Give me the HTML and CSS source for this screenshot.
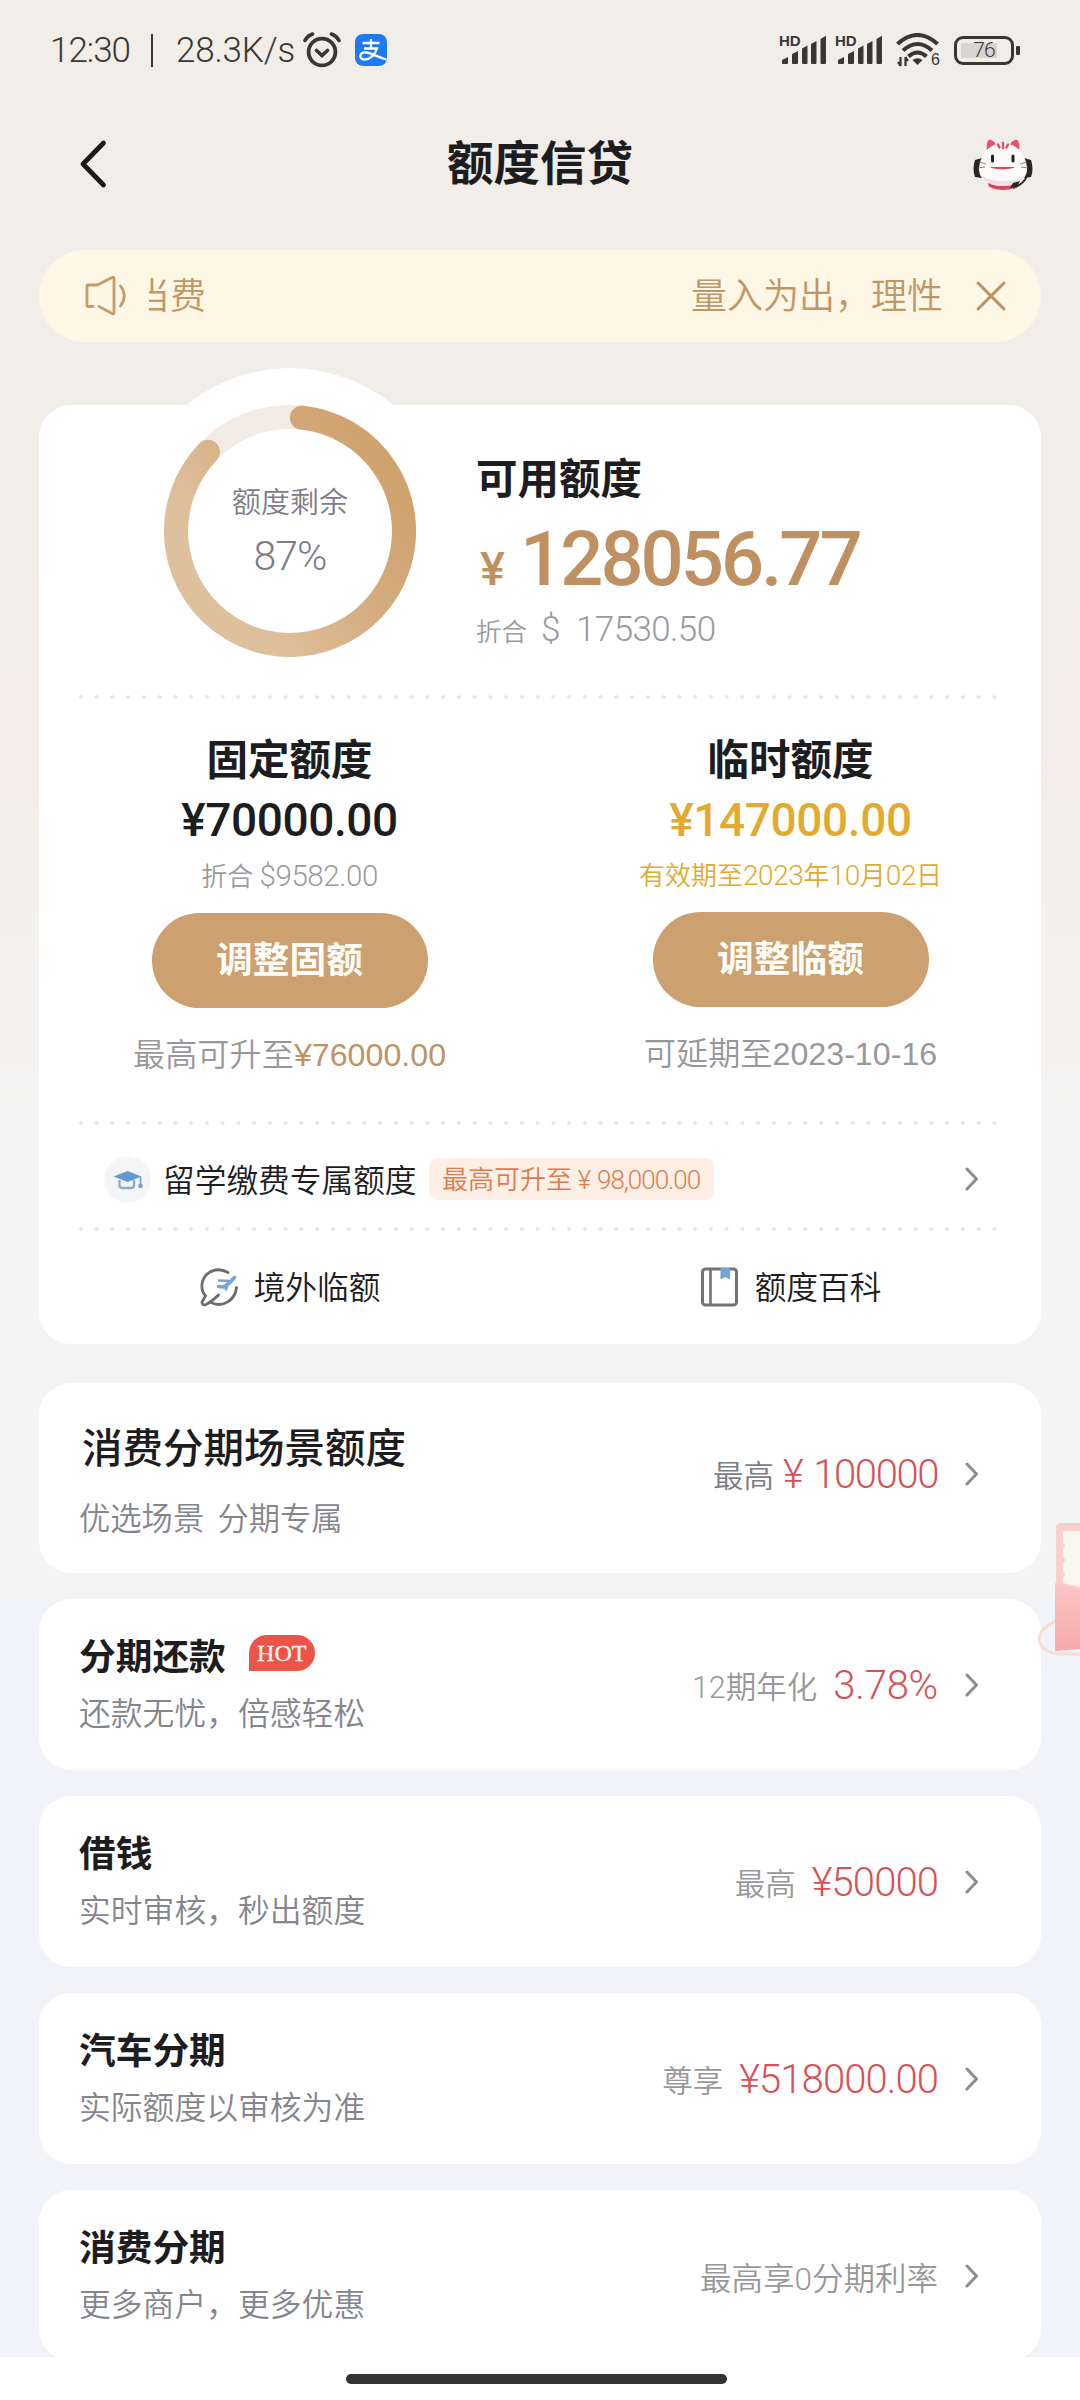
FILE: index.html
```html
<!DOCTYPE html>
<html lang="zh-CN">
<head>
<meta charset="utf-8">
<title>额度信贷</title>
<link rel="stylesheet" href="styles.css">
</head>
<body>
<div class="screen">
  <header class="status">
    <span class="clock">12:30</span><span class="sep"></span><span class="speed">28.3K/s</span>
    <svg class="alarm" width="38" height="36" viewBox="0 0 38 36" fill="none" stroke="#3a3632" stroke-linecap="round">
      <circle cx="19" cy="20" r="13.4" stroke-width="3.8"/>
      <path d="M13.500 18.500l5.500 5 5.500-5" stroke-width="3.6"/>
      <path d="M2 8.500Q4.500 3.800 9.500 2M36 8.500Q33.500 3.800 28.500 2" stroke-width="3.600"/>
    </svg>
    <svg class="alipay" width="32" height="32" viewBox="0 0 32 32">
      <rect width="32" height="32" rx="8" fill="#1d7af3"/>
      <path d="M7.500 9h17M16 5v9M9 14.500h13C20 21 14.500 26 9 25.500c-6-1-4.500-7.500 2-7 6 .5 12 5 20.500 7" fill="none" stroke="#fff" stroke-width="2.300"/>
    </svg>
    <div class="signals">
      <div class="sim"><span class="hd">HD</span><svg width="47" height="30" viewBox="0 0 47 30"><g fill="#3a3632"><path d="M2 28v-3l6-3v6q0 1-1 1H3q-1 0-1-1zM12 19l6-3v12q0 1-1 1h-4q-1 0-1-1zM22 13.500l5.500-3V28q0 1-1 1H23q-1 0-1-1zM31 9l5.500-3v22q0 1-1 1H32q-1 0-1-1zM40.500 4L46 .8V28q0 1-1 1h-3.500q-1 0-1-1z"/></g></svg></div>
      <div class="sim"><span class="hd">HD</span><svg width="47" height="30" viewBox="0 0 47 30"><g fill="#3a3632"><path d="M2 28v-3l6-3v6q0 1-1 1H3q-1 0-1-1zM12 19l6-3v12q0 1-1 1h-4q-1 0-1-1zM22 13.500l5.500-3V28q0 1-1 1H23q-1 0-1-1zM31 9l5.500-3v22q0 1-1 1H32q-1 0-1-1zM40.500 4L46 .8V28q0 1-1 1h-3.500q-1 0-1-1z"/></g></svg></div>
      <div class="wifi"><svg width="44" height="34" viewBox="0 0 44 34"><g fill="none" stroke="#3a3632" stroke-width="4"><path d="M1.500 11Q21.500-7 41.500 11M7 17.500q14.500-13 29 0M12.500 23.500q9-8 18 0"/></g><path d="M16.500 27q5-3.500 10 0l-5 5z" fill="#3a3632"/><path d="M4.500 24v9M9.500 24v9M2 29l2.500 4M12 28l-2.500-4" stroke="#3a3632" stroke-width="2.200"/></svg><span class="six">6</span></div>
      <span class="battery"><i></i><b>76</b></span>
    </div>
  </header>

  <nav class="titlebar">
    <svg width="30" height="50" viewBox="0 0 30 50"><path d="M24.500 4L4 25l20.500 21" fill="none" stroke="#1a1816" stroke-width="4.800" stroke-linecap="round" stroke-linejoin="round"/></svg>
    <h1>额度信贷</h1>
    <svg width="62" height="54" viewBox="0 0 62 54">
      <path d="M3 23q-3 9 0 17l7 1V21zM59 23q3 9 0 17l-7 1V21z" fill="#292627"/>
      <path d="M55 39q-3 8-14 12" fill="none" stroke="#292627" stroke-width="2"/>
      <path d="M14 13Q14 2 18 2q5 1 8 8zM48 13q0-11-4-11-5 1-8 8z" fill="#e84f68" stroke="#fbeaea" stroke-width="1"/>
      <ellipse cx="31" cy="47" rx="15" ry="6" fill="#d9475c"/>
      <path d="M31 6C47 6 55 22 55 32S46 49 31 49 7 42 7 32 15 6 31 6z" fill="#fffafa"/>
      <path d="M9 38Q15 49 31 49T53 38Q46 44 31 44T9 38z" fill="#f3dfdf"/>
      <path d="M31 6v5M26 7.500l1.500 3M36 7.500L34.500 10.500" stroke="#dc5266" stroke-width="2.500" stroke-linecap="round"/>
      <path d="M20.500 19v5M41 19v5" stroke="#222" stroke-width="3" stroke-linecap="round"/>
      <path d="M19 30.500h23q-11 3-23 0z" fill="#d9475c" stroke="#d9475c"/>
      <path d="M7 25l7 2M6 31l7-1M55 25l-7 2M56 31l-7-1" stroke="#776" stroke-width=".9"/>
      <path d="M38 51l3-5 7-2-3 6z" fill="#292627"/>
    </svg>
  </nav>

  <section class="notice">
    <svg width="44" height="42" viewBox="0 0 44 42" fill="none" stroke="#c59c6c" stroke-width="2.800" stroke-linecap="round" stroke-linejoin="round"><path d="M8 31.500H3q-1 0-1-1V11q0-1 1-1h9.500L27 2.500q2-.8 2 1V37.500q0 2-2 1L14 31.500"/><path d="M35.500 11q7.500 9.500 0 20"/></svg>
    <div class="marquee"><span class="cut">当费</span><span>量入为出，理性</span></div>
    <svg width="32" height="32" viewBox="0 0 32 32"><path d="M3 3l26 26M29 3L3 29" stroke="#be9060" stroke-width="3" stroke-linecap="round"/></svg>
  </section>

  <main>
    <section class="card quota">
      <div class="bump"></div>
      <div class="overview">
        <div class="gauge">
          <svg width="252" height="252" viewBox="0 0 252 252">
            <defs><linearGradient id="gold" gradientUnits="userSpaceOnUse" x1="190" y1="20" x2="30" y2="130"><stop offset="0" stop-color="#d0a26e"/><stop offset=".5" stop-color="#d5ae82"/><stop offset="1" stop-color="#dfc09c"/></linearGradient></defs>
            <circle cx="126" cy="126" r="114" fill="none" stroke="#f4ebe4" stroke-width="24"/>
            <path d="M137.900 12.600A114 114 0 1 1 44 46.800" fill="none" stroke="url(#gold)" stroke-width="24" stroke-linecap="round"/>
          </svg>
          <div class="gauge-text"><span>额度剩余</span><b>87%</b></div>
        </div>
        <div class="avail">
          <h2>可用额度</h2>
          <p class="big"><small>¥</small><span>128056.77</span></p>
          <p class="usd"><small>折合</small><span class="dollar">$</span><span>17530.50</span></p>
        </div>
      </div>
      <div class="dots"></div>
      <div class="pair">
        <div class="col">
          <h2>固定额度</h2>
          <p class="sum">¥70000.00</p>
          <p class="note">折合 <span>$9582.00</span></p>
          <a class="btn">调整固额</a>
          <p class="foot">最高可升至<em>¥76000.00</em></p>
        </div>
        <div class="col">
          <h2>临时额度</h2>
          <p class="sum amber">¥147000.00</p>
          <p class="note date">有效期至<span>2023</span>年<span>10</span>月<span>02</span>日</p>
          <a class="btn">调整临额</a>
          <p class="foot">可延期至2023-10-16</p>
        </div>
      </div>
      <div class="dots"></div>
      <div class="study">
        <svg width="47" height="47" viewBox="0 0 47 47"><circle cx="23.500" cy="23.500" r="23.200" fill="#f4f5f7"/><path d="M15.500 24v5.500q0 2.500 3 2.500h8.500q3 0 3-2.500V24" fill="none" stroke="#8fa9c9" stroke-width="2.400"/><path d="M9.500 20.500L23.500 15l14 5.500L23.500 26z" fill="#6598cf"/><path d="M36.500 21v8" stroke="#7ba1cc" stroke-width="1.800"/><circle cx="36.500" cy="30" r="2.300" fill="#7ba1cc"/></svg>
        <span class="study-name">留学缴费专属额度</span>
        <span class="tag">最高可升至<span class="yen">¥</span><span class="n">98,000.00</span></span>
        <svg class="chev" width="14" height="26" viewBox="0 0 14 26"><path d="M2 3l9.500 10L2 23"/></svg>
      </div>
      <div class="dots"></div>
      <div class="links">
        <a><svg width="40" height="40" viewBox="0 0 40 40" fill="none" stroke-linecap="round"><path d="M29 5.500C19-.5 6.500 4 3.500 14.500c-1.500 6 0 11 3 14.500L3 35q0 4 4 2.500 6-3 12.500-9.500M12 35.500c11 5.500 24-1.500 25.500-15" stroke="#6d6d6d" stroke-width="2.800"/><path d="M35.500 10.500Q31 16 25 20l-5.500-.5" stroke="#78a3d6" stroke-width="3.600"/><path d="M30 14l-10-.5M29 16.500l-2 6" stroke="#78a3d6" stroke-width="2.400"/></svg><span>境外临额</span></a>
        <a><svg width="40" height="40" viewBox="0 0 40 40"><rect x="2.500" y="2" width="34" height="36" rx="3" fill="none" stroke="#737373" stroke-width="3"/><path d="M10.500 2v36" stroke="#737373" stroke-width="2.600"/><path d="M20.500 1H30v11.500l-4.700-2.500-4.800 2.500z" fill="#74a3d8"/></svg><span>额度百科</span></a>
      </div>
    </section>

    <section class="card scene">
      <div class="left"><h3>消费分期场景额度</h3><p>优选场景&nbsp; 分期专属</p></div>
      <div class="right"><span class="lab dark">最高</span><span class="val wide"><span>¥</span>100000</span><svg class="chev" width="14" height="26" viewBox="0 0 14 26"><path d="M2 3l9.500 10L2 23"/></svg></div>
    </section>

    <section class="card item">
      <div class="left"><h3>分期还款<span class="hot">HOT</span></h3><p>还款无忧，倍感轻松</p></div>
      <div class="right"><span class="lab">12期年化</span><span class="val pct">3.78%</span><svg class="chev" width="14" height="26" viewBox="0 0 14 26"><path d="M2 3l9.500 10L2 23"/></svg></div>
    </section>
    <section class="card item">
      <div class="left"><h3>借钱</h3><p>实时审核，秒出额度</p></div>
      <div class="right"><span class="lab">最高</span><span class="val">¥50000</span><svg class="chev" width="14" height="26" viewBox="0 0 14 26"><path d="M2 3l9.500 10L2 23"/></svg></div>
    </section>
    <section class="card item">
      <div class="left"><h3>汽车分期</h3><p>实际额度以审核为准</p></div>
      <div class="right"><span class="lab">尊享</span><span class="val">¥518000.00</span><svg class="chev" width="14" height="26" viewBox="0 0 14 26"><path d="M2 3l9.500 10L2 23"/></svg></div>
    </section>
    <section class="card item">
      <div class="left"><h3>消费分期</h3><p>更多商户，更多优惠</p></div>
      <div class="right"><span class="lab rate">最高享0分期利率</span><svg class="chev" width="14" height="26" viewBox="0 0 14 26"><path d="M2 3l9.500 10L2 23"/></svg></div>
    </section>
  </main>

  <svg class="envelope" width="42" height="134" viewBox="0 0 42 134">
    <defs><linearGradient id="pink" x1="0" y1="0" x2="0" y2="1"><stop offset="0" stop-color="#fbc6c5"/><stop offset="1" stop-color="#f7a9ac"/></linearGradient></defs>
    <path d="M19 98Q2 104 1 117q3 13 22 14h19" fill="none" stroke="#f8dcd5" stroke-width="3"/>
    <path d="M18 70V5q0-5 5-5h19v72z" fill="#f9d0cc"/>
    <path d="M25 8h17v56l-17-4v-6q4-3 0-6v-8q4-3 0-6v-8q4-3 0-6z" fill="#faf7ef"/>
    <path d="M17 60l25 6v60l-25 2z" fill="url(#pink)"/>
  </svg>
  <footer class="home"><i></i></footer>
</div>
</body>
</html>
```
FILE: styles.css
```css
* { box-sizing: border-box; margin: 0; padding: 0; }
body {
  font-family: Roboto, "Noto Sans CJK SC", sans-serif;
  font-weight: 350;
  color: #1d1d1f;
}
h1, h2, h3, p, b, em, i { font-weight: inherit; font-style: normal; }
svg { flex: none; display: block; }

.screen {
  position: relative;
  width: 1080px;
  height: 2400px;
  overflow: hidden;
  display: flex;
  flex-direction: column;
  background: linear-gradient(#f1ede8 0, #f2ede9 750px, #f4f4f4 1150px, #f4f4f4 1600px, #f2f3f8 1600px);
}

.status { flex: none; height: 100px; display: flex; align-items: center; padding: 0 66px 0 50px; color: #3a3632; font-size: 35px; font-weight: 300; }
.clock { width: 79px; letter-spacing: -1px; }
.sep { width: 2px; height: 33px; margin: 0 23px 0 22px; background: #3a3632; }
.speed { width: 127px; letter-spacing: -.2px; }
.alarm { margin-right: 14px; }
.signals { margin-left: auto; display: flex; align-items: center; gap: 9px; }
.sim, .wifi { position: relative; }
.wifi { margin-left: 4px; }
.hd { position: absolute; left: -1px; top: -2px; font: 700 15px/15px "Liberation Sans", sans-serif; }
.six { position: absolute; right: 0; bottom: -1px; font: 400 16px/17px "Liberation Sans", sans-serif; }
.battery { position: relative; width: 60px; height: 29px; margin-left: 5px; border: 3px solid #3a3632; border-radius: 9px; display: flex; align-items: center; justify-content: center; }
.battery::after { content: ""; position: absolute; right: -9px; top: 7px; width: 4px; height: 9px; border-radius: 1px; background: #3a3632; }
.battery i { position: absolute; left: 4px; top: 4px; width: 36px; height: 15px; background: #d8d4cf; }
.battery b { position: relative; font-size: 21px; line-height: 23px; letter-spacing: -1px; }

.titlebar { flex: none; height: 128px; padding: 0 46px 0 79px; display: flex; align-items: center; justify-content: space-between; }
.titlebar h1 { font-size: 46.500px; line-height: 60px; font-weight: 700; margin-right: 1px; }

.notice { flex: none; height: 92px; margin: 22px 39px 0; padding: 0 34px 0 46px; border-radius: 46px; background: #fef7e6; color: #c19767; display: flex; align-items: center; }
.marquee { width: 794px; margin: 2px 32px 0 20px; overflow: hidden; display: flex; justify-content: space-between; font-size: 36px; line-height: 50px; }
.cut { margin-left: -15px; }

main { flex: 1; min-height: 0; padding: 63px 39px 0; display: flex; flex-direction: column; gap: 26px; overflow: hidden; }
.card { flex: none; background: #fff; border-radius: 32px; }

.quota { position: relative; height: 939px; margin-bottom: 13px; }
.bump { position: absolute; left: 88px; top: -37px; width: 326px; height: 326px; border-radius: 50%; background: #fff; }
.overview { position: relative; height: 290px; padding-left: 125px; display: flex; }
.gauge { width: 252px; height: 252px; display: grid; }
.gauge > * { grid-area: 1 / 1; }
.gauge-text { display: flex; flex-direction: column; align-items: center; padding-top: 77px; color: #7c7d85; }
.gauge-text span { font-size: 29px; line-height: 42px; }
.gauge-text b { font-size: 41px; line-height: 60px; letter-spacing: -1px; margin-top: 2px; }
.avail { padding: 50px 0 0 60px; }
h2 { font-size: 41.500px; line-height: 50px; font-weight: 700; }
.big { display: flex; align-items: baseline; color: #bf9061; font-weight: 500; height: 88px; line-height: 108px; }
.big small { width: 44px; padding-left: 4px; font-size: 47px; }
.big span { font-size: 76px; letter-spacing: -3px; }
.usd { display: flex; align-items: baseline; color: #9a9a9c; line-height: 46px; margin-top: 14px; font-size: 35px; }
.usd small { font-size: 25.500px; width: 65px; }
.usd .dollar { width: 35px; }
.usd span { letter-spacing: -.6px; }

.dots { height: 4px; width: 929px; margin-left: 34px; background: radial-gradient(circle at center, #e6e6e6 1.500px, transparent 2.200px) 0 0 / 15.750px 4px; }
.pair { display: flex; height: 422px; }
.col { flex: 1; display: flex; flex-direction: column; align-items: center; padding-top: 37px; }
.sum { font-size: 46px; line-height: 56px; font-weight: 500; letter-spacing: -.4px; margin-top: 6px; }
.note { color: #9b9b9d; font-size: 26px; line-height: 36px; margin-top: 10px; }
.note span { font-size: 29.500px; letter-spacing: -.4px; }
.amber, .note.date { color: #e2aa30; }
.note.date span { font-size: 28px; }
.btn { width: 276px; height: 95px; margin-top: 18px; border-radius: 48px; background: #cca06f; color: #fffdf8; font-size: 36.700px; line-height: 96px; font-weight: 700; text-align: center; }
.foot { color: #98989a; font: 350 32.200px/44px "Liberation Sans", "Noto Sans CJK SC", sans-serif; margin-top: 25px; }
.foot em { color: #c09264; }

.study { height: 102px; padding: 6px 62px 0 65px; display: flex; align-items: center; }
.study-name { margin: 5px 0 0 12px; font-size: 31.700px; line-height: 44px; width: 266px; }
.tag { display: flex; height: 42px; line-height: 45px; width: 285px; padding-left: 13px; border-radius: 8px; background: #fdeee6; color: #dc7d4c; font-size: 26px; }
.tag .yen { width: 25px; text-align: center; }
.tag .n { letter-spacing: -1px; }
.chev { margin-left: auto; fill: none; stroke: #8d8d8f; stroke-width: 3; stroke-linecap: round; stroke-linejoin: round; }
.links { display: flex; height: 112px; }
.links a { flex: 1; display: flex; align-items: center; justify-content: center; gap: 15px; font-size: 31.700px; line-height: 44px; }
.links span { padding-top: 4px; }

.scene, .item { display: flex; justify-content: space-between; padding: 0 62px 0 40px; }
.scene { height: 190px; }
.item { height: 171px; }
.left p { color: #85868c; font-size: 31.800px; line-height: 44px; }
.scene .left { padding-top: 36px; }
.scene h3 { font-size: 40.500px; line-height: 60px; font-weight: 500; padding-left: 3px; }
.scene .left p { margin-top: 19px; white-space: pre; font-size: 31.300px; word-spacing: -1px; }
.item .left { padding-top: 33px; }
.item h3 { display: flex; align-items: center; font-size: 36.700px; line-height: 52px; font-weight: 700; }
.item .left p { margin-top: 8px; }
.hot { width: 66px; height: 36px; margin: -10px 0 0 23px; border-radius: 18px 18px 18px 0; background: #ea5449; color: #fff1ec; font: 400 24px/36px "Liberation Serif", serif; text-align: center; -webkit-text-stroke: .4px #fff1ec; }
.right { display: flex; align-items: center; height: 172px; }
.scene .right { height: 182px; }
.lab { font-size: 30.500px; color: #98989a; }
.lab.dark { color: #7c7d83; }
.lab.rate { font-size: 31.500px; }
.val { margin-left: 16px; font-size: 40px; color: #d65256; letter-spacing: -.9px; }
.val.pct { letter-spacing: -.2px; }
.val.wide { margin-left: 9px; letter-spacing: -1.400px; }
.val.wide span { margin-right: 11px; }
.right .chev { margin-left: 27px; }

.envelope { position: absolute; right: 0; top: 1523px; }
.home { flex: none; height: 43px; background: #fff; display: flex; justify-content: center; }
.home i { width: 381px; height: 10px; margin: 17px 8px 0 0; border-radius: 5px; background: #333; }
```
